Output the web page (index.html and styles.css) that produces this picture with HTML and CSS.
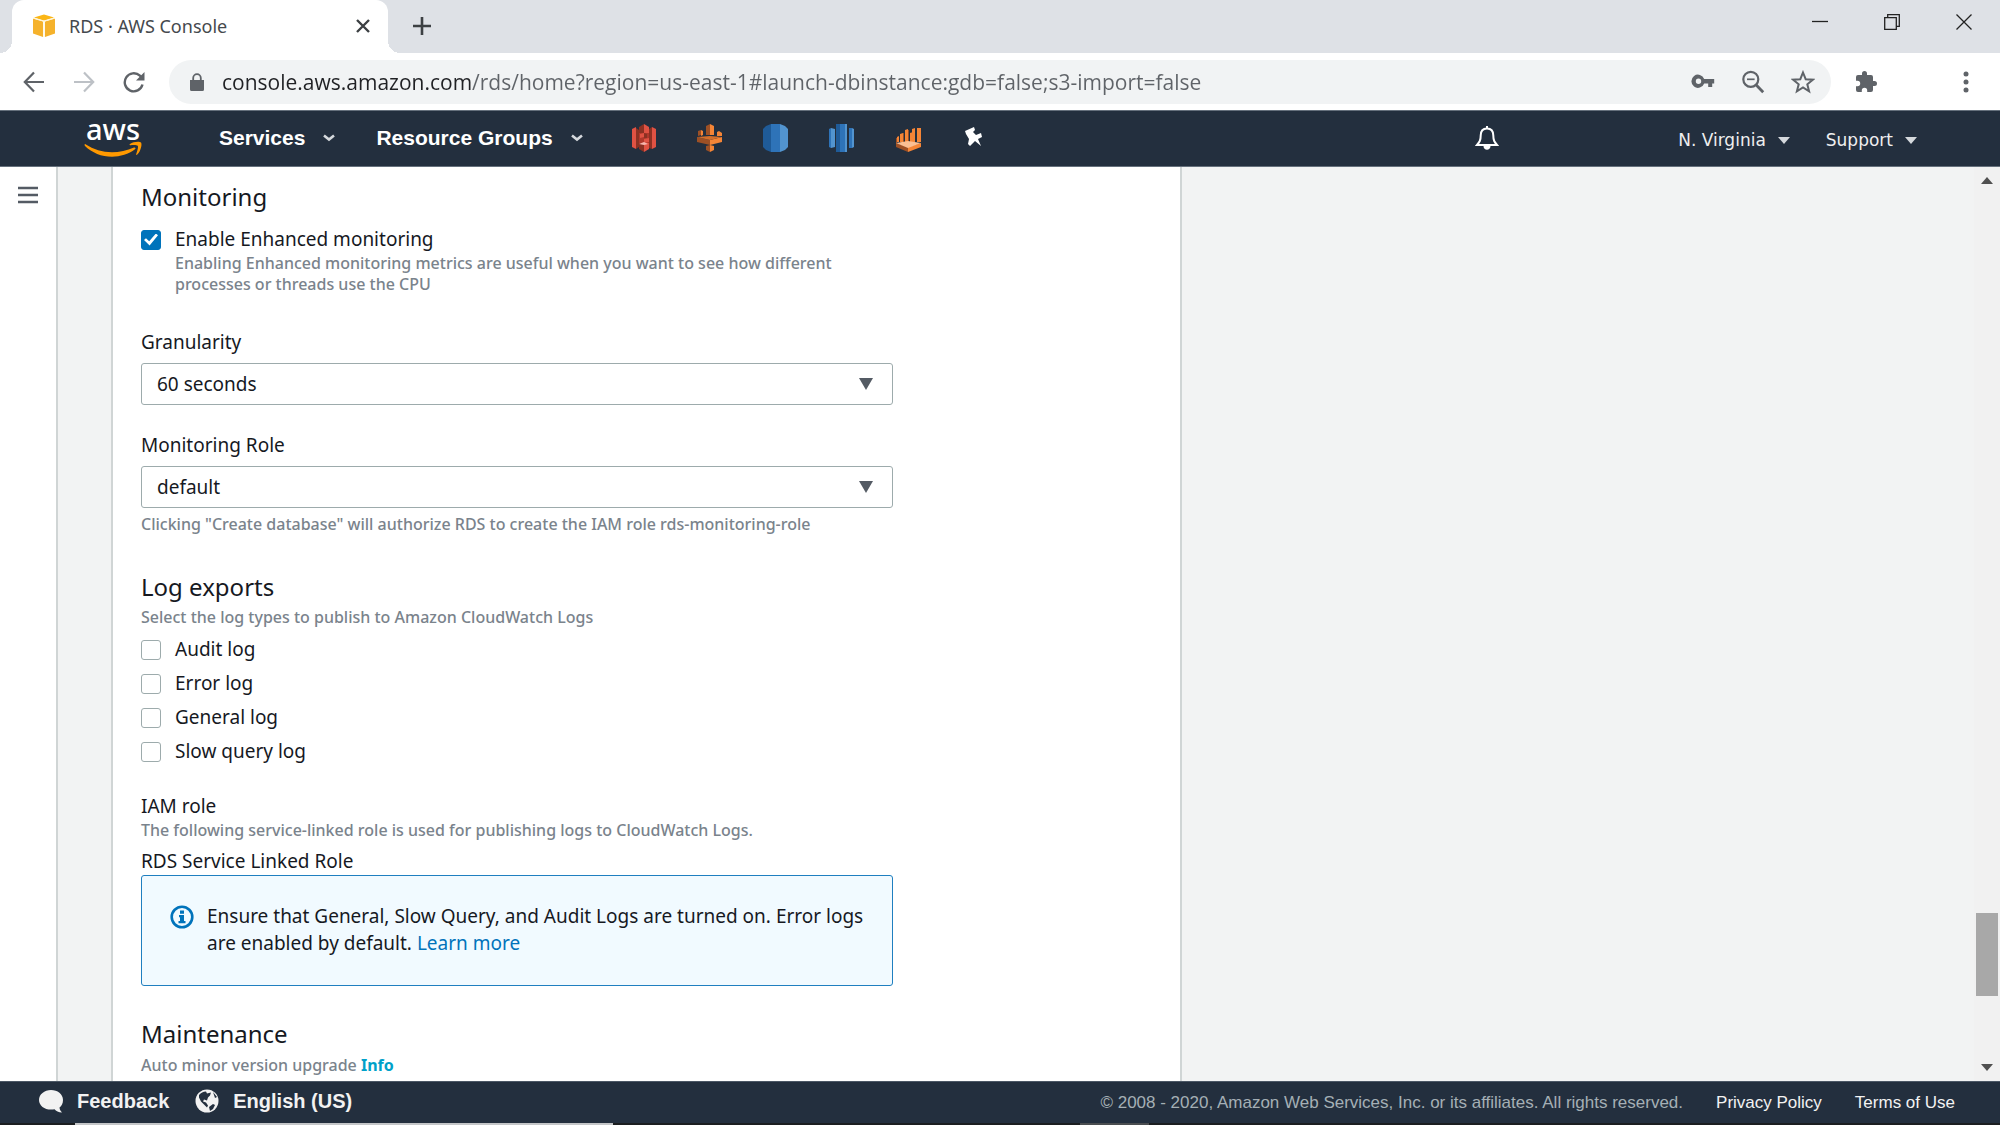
FILE: index.html
```html
<!DOCTYPE html>
<html lang="en">
<head>
<meta charset="utf-8">
<title>RDS · AWS Console</title>
<link rel="stylesheet" href="styles.css">
</head>
<body>
<header class="browser">
  <div class="tabstrip">
    <div class="tab">
      <svg class="tab-favicon" width="24" height="24" viewBox="0 0 24 24"><path fill="#f5b22c" d="M1 4.500 11 7.500V23L1 19.500zM13 7.500 23 4.500V19.500L13 23z"/><path fill="#fbb615" d="M12 .5 22 3.500 12 6.500 2 3.500z"/><path stroke="#fff4d6" fill="none" d="M1 4l11 3.300L23 4M12 7v16"/></svg>
      <span class="tab-title">RDS · AWS Console</span>
      <button class="icon-button tab-close" aria-label="Close tab"><svg width="14" height="14" viewBox="0 0 14 14"><path d="M1 1l12 12M13 1L1 13" stroke="#3c4043" stroke-width="2.400"/></svg></button>
    </div>
    <button class="icon-button new-tab" aria-label="New tab"><svg width="20" height="20" viewBox="0 0 20 20"><path d="M10 1v18M1 10h18" stroke="#3c4043" stroke-width="2.600"/></svg></button>
    <div class="window-controls">
      <button class="icon-button" aria-label="Minimize"><svg width="16" height="16" viewBox="0 0 16 16"><path d="M0 7.500h16" stroke="#222" stroke-width="1.300"/></svg></button>
      <button class="icon-button" aria-label="Restore"><svg width="16" height="16" viewBox="0 0 16 16" fill="none" stroke="#222" stroke-width="1.300"><path d="M.7 3.700h11.600v11.600H.7zM3.700 3.700V.7h11.600v11.600h-3"/></svg></button>
      <button class="icon-button" aria-label="Close"><svg width="16" height="16" viewBox="0 0 16 16"><path d="M.5.5l15 15M15.500.5l-15 15" stroke="#222" stroke-width="1.300"/></svg></button>
    </div>
  </div>
  <div class="toolbar">
    <div class="nav-buttons">
      <button class="icon-button" aria-label="Back"><svg width="22" height="22" viewBox="0 0 22 22" fill="none" stroke="#5f6368" stroke-width="2.200"><path d="M21 11H2M11 1.500L1.800 11l9.200 9.500"/></svg></button>
      <button class="icon-button" aria-label="Forward"><svg width="22" height="22" viewBox="0 0 22 22" fill="none" stroke="#bdc1c6" stroke-width="2.200"><path d="M1 11h19M11 1.500l9.200 9.500-9.200 9.500"/></svg></button>
      <button class="icon-button" aria-label="Reload"><svg width="22" height="22" viewBox="0 0 22 22"><path d="M19.500 13.500a9 9 0 1 1-2.600-8.800l2 2" fill="none" stroke="#5f6368" stroke-width="2.400"/><path d="M21.500 1v8.500H13z" fill="#5f6368"/></svg></button>
    </div>
    <div class="address">
      <svg width="14" height="18" viewBox="0 0 14 18"><path d="M0 7h14v9.500a1.500 1.500 0 0 1-1.500 1.500h-11A1.500 1.500 0 0 1 0 16.500z" fill="#5f6368"/><path d="M3.200 8V5a3.800 3.800 0 0 1 7.600 0v3" fill="none" stroke="#5f6368" stroke-width="1.800"/></svg>
      <input class="url" type="text" aria-label="Address" spellcheck="false" value="console.aws.amazon.com/rds/home?region=us-east-1#launch-dbinstance:gdb=false;s3-import=false">
      <div class="address-actions">
        <button class="icon-button" aria-label="Saved passwords"><svg width="24" height="24" viewBox="0 0 24 24"><path fill="#5f6368" fill-rule="evenodd" d="M13.200 9h10v4.500h-2V17h-4v-3.500h-4a6.600 6.600 0 1 1 0-4.500zM7.500 8.500a2.700 2.700 0 1 0 0 5.400 2.700 2.700 0 0 0 0-5.400z"/></svg></button>
        <button class="icon-button" aria-label="Zoom"><svg width="24" height="24" viewBox="0 0 24 24" fill="none" stroke="#5f6368"><circle cx="9.800" cy="9.300" r="7.500" stroke-width="2.200"/><path d="M6 9.300h7.600" stroke-width="1.700"/><path d="M15 14.800l7.200 7.400" stroke-width="2.800"/></svg></button>
        <button class="icon-button" aria-label="Bookmark"><svg width="24" height="24" viewBox="0 0 24 24"><path d="M12 2.500l2.700 6.700 7.100.5-5.500 4.600 1.800 7L12 17.400l-6.100 3.900 1.800-7-5.500-4.600 7.100-.5z" fill="none" stroke="#5f6368" stroke-width="2"/></svg></button>
      </div>
    </div>
    <button class="icon-button extensions" aria-label="Extensions"><svg width="24" height="24" viewBox="0 0 24 24"><path fill="#5f6368" d="M20.500 11H19V7a2 2 0 0 0-2-2h-4V3.500a2.500 2.500 0 0 0-5 0V5H4a2 2 0 0 0-2 2v3.800h1.500a2.700 2.700 0 0 1 0 5.400H2V20a2 2 0 0 0 2 2h3.800v-1.500a2.700 2.700 0 0 1 5.400 0V22H17a2 2 0 0 0 2-2v-4h1.500a2.500 2.500 0 0 0 0-5z"/></svg></button>
    <button class="icon-button menu" aria-label="Browser menu"><svg width="6" height="22" viewBox="0 0 6 22" fill="#5f6368"><circle cx="3" cy="3" r="2.500"/><circle cx="3" cy="11" r="2.500"/><circle cx="3" cy="19" r="2.500"/></svg></button>
  </div>
</header>

<nav class="console-nav">
  <a class="logo" href="#" aria-label="AWS home">
    <span class="logo-word">aws</span>
    <svg class="logo-smile" width="58" height="18" viewBox="0 0 58 18"><path fill="#ff9900" d="M1.500 3.200c8 5.200 17 8 26.500 8 7.500 0 15-1.600 22-4.700 1.200-.5 2.200.8 1 1.800C44.800 13 36 15.800 28 15.800 17.500 15.800 8 11.700 1 5 .2 4 .6 2.700 1.500 3.200z"/><path fill="#ff9900" d="M46 3c3-2.300 9.500-3 11-1.500 1.400 1.700-.5 9-3.700 12-.7.700-1.500.4-1.100-.6 1-2.800 2.400-7 1.500-8.200-.9-1-4.900-.8-7.300-.5-.9.100-1.200-.6-.4-1.200z"/></svg>
  </a>
  <button class="nav-menu services">Services <svg width="14" height="8" viewBox="0 0 14 8"><path d="M2 1.500l5 4 5-4" fill="none" stroke="#d5d9dd" stroke-width="2.600"/></svg></button>
  <button class="nav-menu">Resource Groups <svg width="14" height="8" viewBox="0 0 14 8"><path d="M2 1.500l5 4 5-4" fill="none" stroke="#d5d9dd" stroke-width="2.600"/></svg></button>
  <div class="shortcuts">
    <a href="#" aria-label="S3"><svg width="28" height="28" viewBox="0 0 28 28"><path fill="#e05243" d="M2 5l4-2v22l-4-2zM22 3l4 2v18l-4 2z"/><path fill="#8c3123" d="M6 4l3 2v17l-3 2zM22 3l-3 2v19l3 1z"/><path fill="#8c3123" d="M9 3l5-3v28l-5-3z"/><path fill="#e05243" d="M14 0l5 3v22l-5 3z"/><path fill="#b0382b" d="M9 9h10v10H9z"/><path fill="#e05243" d="M10 10l4-1v4l-4 1zM14 15l5-1v4l-5 1z"/><path fill="#8c3123" d="M14 9l3 1v4h-3z"/><path fill="#f7b5ad" d="M9 20l5-2 4 2-4 1z"/></svg></a>
    <a href="#" aria-label="IoT"><svg width="28" height="28" viewBox="0 0 28 28"><path fill="#9d5025" d="M1 13l13 3v5L1 18zM2 7l3-1v5l-3 1zM10 2l4-2v11h-4zM10 22l4-1v7l-4-2z"/><path fill="#f58536" d="M14 16l12-3v5l-12 3zM5 6l2 1v4l-2 1zM14 0l4 2v9h-4zM14 21l4 1v4l-4 2zM21 8l2-1 3 2v3h-5z"/><path fill="#d46f2b" d="M1 13l13-1 12 1-12 3z"/></svg></a>
    <a href="#" aria-label="RDS"><svg width="28" height="28" viewBox="0 0 28 28"><path fill="#1f5b98" d="M1 5l3-3 5-2v28l-5-2-3-3z"/><path fill="#2e73b8" d="M9 0h9v28H9z"/><path fill="#5294cf" d="M18 0l5 2 3 3v18l-3 3-5 2z"/></svg></a>
    <a href="#" aria-label="Redshift"><svg width="28" height="28" viewBox="0 0 28 28"><path fill="#2e73b8" d="M1 5l2-1v20l-2-1zM21 4h3v20h-3z"/><path fill="#5294cf" d="M3 4l4 1v18l-4 1zM17 0h2v28h-2zM24 4l2 1v18l-2 1z"/><path fill="#1f5b98" d="M8 0h4v28H8z"/><path fill="#2e73b8" d="M12 0h5v28h-5z"/></svg></a>
    <a href="#" aria-label="EMR"><svg width="28" height="28" viewBox="0 0 28 28"><path fill="#f58536" d="M3 13l2-1v6H3zM6 10l3-1v9H6zM11 6l3-1v13h-3zM16 9l3-1v10h-3zM18 5l3-1v14h-3zM23 4h4v14h-4z"/><path fill="#9d5025" d="M2 14h1v6H2zM9 9h1v9H9zM14 6h1v12h-1zM2 19l12 4v5L2 23z"/><path fill="#f58536" d="M27 19l-13 4v5l13-5z"/><path fill="#fbbf93" d="M2 19l12-2 13 2-13 5z"/></svg></a>
    <a href="#" aria-label="Customize shortcuts"><svg width="28" height="28" viewBox="0 0 28 28"><path fill="#fff" d="M5 7l9-4 1 3-2 2 3 3 5-2 1 4-4 2 3 7-6-5-5 5-2-2 1-5-3-5z"/></svg></a>
  </div>
  <button class="icon-button bell" aria-label="Notifications"><svg width="24" height="26" viewBox="0 0 24 26"><path d="M12 3.500c-4.500 0-6.300 3.300-6.300 7 0 5-1.200 6.500-3.700 9.500h20c-2.500-3-3.700-4.500-3.700-9.500 0-3.700-1.800-7-6.300-7z" fill="none" stroke="#fff" stroke-width="2"/><path fill="#fff" d="M11 1h2v3h-2zM8.500 21h7c0 5-7 5-7 0z"/></svg></button>
  <button class="nav-menu small">N. Virginia <svg width="12" height="7" viewBox="0 0 12 7"><path d="M0 0h12L6 7z" fill="#d5d9dd"/></svg></button>
  <button class="nav-menu small">Support <svg width="12" height="7" viewBox="0 0 12 7"><path d="M0 0h12L6 7z" fill="#d5d9dd"/></svg></button>
</nav>

<div class="workspace">
  <aside class="rail">
    <button class="icon-button" aria-label="Open navigation"><svg width="22" height="18" viewBox="0 0 22 18"><path d="M1 2h20M1 9h20M1 16h20" stroke="#545b64" stroke-width="2.600"/></svg></button>
  </aside>
  <main class="content">
    <form class="card">
      <section class="group">
        <h2>Monitoring</h2>
        <div class="check-row first">
          <input type="checkbox" id="enhanced" checked aria-describedby="enhanced-hint">
          <label for="enhanced">Enable Enhanced monitoring</label>
        </div>
        <p class="hint indented" id="enhanced-hint">Enabling Enhanced monitoring metrics are useful when you want to see how different processes or threads use the CPU</p>
        <div class="field">
          <label for="granularity">Granularity</label>
          <div class="select-wrap">
            <select id="granularity"><option>60 seconds</option></select>
            <svg width="14" height="12" viewBox="0 0 14 12"><path d="M0 0h14L7 12z" fill="#545b64"/></svg>
          </div>
        </div>
        <div class="field role">
          <label for="role">Monitoring Role</label>
          <div class="select-wrap">
            <select id="role"><option>default</option></select>
            <svg width="14" height="12" viewBox="0 0 14 12"><path d="M0 0h14L7 12z" fill="#545b64"/></svg>
          </div>
          <p class="hint">Clicking "Create database" will authorize RDS to create the IAM role rds-monitoring-role</p>
        </div>
      </section>
      <section class="group logs">
        <h2>Log exports</h2>
        <p class="hint">Select the log types to publish to Amazon CloudWatch Logs</p>
        <div class="check-list">
          <div class="check-row"><input type="checkbox" id="audit"><label for="audit">Audit log</label></div>
          <div class="check-row"><input type="checkbox" id="error"><label for="error">Error log</label></div>
          <div class="check-row"><input type="checkbox" id="general"><label for="general">General log</label></div>
          <div class="check-row"><input type="checkbox" id="slow"><label for="slow">Slow query log</label></div>
        </div>
        <p class="label iam">IAM role</p>
        <p class="hint">The following service-linked role is used for publishing logs to CloudWatch Logs.</p>
        <p class="label linked">RDS Service Linked Role</p>
        <div class="notice">
          <svg width="24" height="24" viewBox="0 0 24 24"><circle cx="12" cy="12" r="10.300" fill="none" stroke="#0073bb" stroke-width="2.600"/><path fill="#0073bb" d="M10 5.500h4v3.300h-4zM9 10h5v6h1.500v2.300h-7V16H10v-3.700H9z"/></svg>
          <p>Ensure that General, Slow Query, and Audit Logs are turned on. Error logs are enabled by default. <a href="#">Learn more</a></p>
        </div>
      </section>
      <section class="group maintenance">
        <h2>Maintenance</h2>
        <p class="hint">Auto minor version upgrade <a class="info" href="#">Info</a></p>
      </section>
    </form>
  </main>
  <div class="scrollbar" aria-hidden="true">
    <svg width="12" height="7" viewBox="0 0 12 7"><path d="M0 7h12L6 0z" fill="#505050"/></svg>
    <div class="track"><div class="thumb"></div></div>
    <svg width="12" height="7" viewBox="0 0 12 7"><path d="M0 0h12L6 7z" fill="#505050"/></svg>
  </div>
</div>

<footer class="console-footer">
  <button class="footer-button"><svg width="24" height="24" viewBox="0 0 24 24"><path fill="#f2f2f2" d="M12 1c6.500 0 12 4 12 10 0 3.500-1.500 6-3.500 7.500.2 2 1 3.500 2.500 5-3.500 0-6-1.500-7.500-3.300-1 .3-2.200.4-3.500.4-6.600 0-12-4-12-9.600S5.400 1 12 1z"/></svg>Feedback</button>
  <button class="footer-button"><svg width="24" height="24" viewBox="0 0 24 24"><circle cx="12" cy="12" r="11.500" fill="#f2f2f2"/><path fill="#232f3e" d="M4 6c2-2 4-3.500 7-3.500l1 2 4-1-1 3-2 2-1 3-3-1-1 2 3 1 2 3-1 2-3-3-3-3-2-4zM14 18l4-3 2 1-2 4-3 2zM18 3l4 5-2 1z"/></svg>English (US)</button>
  <p class="copyright">© 2008 - 2020, Amazon Web Services, Inc. or its affiliates. All rights reserved.</p>
  <a href="#">Privacy Policy</a>
  <a href="#">Terms of Use</a>
</footer>
<div class="taskbar" aria-hidden="true"><span class="task-search"></span><span class="task-active"></span></div>
</body>
</html>
```
FILE: styles.css
```css
*, *::before, *::after { box-sizing: border-box; }

body {
  margin: 0;
  height: 100vh;
  display: flex;
  flex-direction: column;
  overflow: hidden;
  background: #f2f3f3;
  color: #16191f;
  font-family: "Noto Sans", "Open Sans", sans-serif;
  font-size: 19px;
  line-height: 27px;
}

h2, p { margin: 0; }
svg { display: block; flex: none; }
button { font: inherit; color: inherit; background: none; border: 0; padding: 0; cursor: pointer; }
a { text-decoration: none; }

.icon-button { display: flex; align-items: center; justify-content: center; }

/* Browser frame */
.tabstrip {
  display: flex;
  align-items: flex-start;
  height: 53px;
  padding-left: 12px;
  background: #dee1e6;
}
.tab {
  position: relative;
  display: flex;
  align-items: center;
  width: 376px;
  height: 53px;
  padding: 0 18px 1px 20px;
  background: #fff;
  border-radius: 12px 12px 0 0;
}
.tab::before, .tab::after {
  content: "";
  position: absolute;
  bottom: 0;
  width: 12px;
  height: 12px;
}
.tab::before { right: 100%; background: radial-gradient(circle at 0 0, #dee1e6 12px, #fff 12px); }
.tab::after { left: 100%; background: radial-gradient(circle at 100% 0, #dee1e6 12px, #fff 12px); }
.tab-title { margin-left: 13px; font-size: 18px; color: #45494d; }
.tab-close { margin-left: auto; }
.new-tab { height: 52px; margin-left: 24px; }
.window-controls { display: flex; gap: 56px; margin: 14px 28px 0 auto; }

.toolbar {
  display: flex;
  align-items: center;
  height: 57px;
  padding: 0 31px 0 23px;
  background: #fff;
}
.nav-buttons { display: flex; gap: 28px; }
.address {
  flex: 1;
  display: flex;
  align-items: center;
  height: 44px;
  margin-left: 24px;
  padding: 0 16px 0 21px;
  border-radius: 22px;
  background: #f1f3f4;
}
.url {
  flex: 1;
  min-width: 0;
  margin-left: 18px;
  padding: 0;
  border: 0;
  outline: 0;
  font: 21px/30px "Open Sans", "Noto Sans", sans-serif;
  color: transparent;
  background: linear-gradient(to right, #202124 249px, #5f6368 249px);
  -webkit-background-clip: text;
  background-clip: text;
}
.address-actions { display: flex; gap: 26px; }
.extensions { margin-left: 23px; }
.menu { margin-left: auto; padding-left: 85px; }

/* Console navigation */
.console-nav {
  display: flex;
  align-items: center;
  height: 57px;
  padding: 0 83px 2px 84px;
  background: #232f3e;
  border-top: 1px solid #65707c;
  border-bottom: 1px solid #65707c;
  color: #fff;
}
.logo { display: flex; flex-direction: column; align-items: center; color: #fff; }
.logo-word { font-size: 29px; line-height: 24px; font-weight: 500; }
.nav-menu {
  display: flex;
  align-items: center;
  gap: 17px;
  margin-right: 40px;
  font: bold 21px/27px "Liberation Sans", Arial, sans-serif;
}
.services { margin-left: 77px; }
.shortcuts { display: flex; gap: 38px; margin-left: 6px; }
.bell { margin-left: auto; margin-right: 179px; }
.nav-menu.small {
  gap: 12px;
  margin-right: 36px;
  padding-top: 5px;
  font: 17px/24px "DejaVu Sans", Verdana, sans-serif;
  color: #eee;
}
.nav-menu.small:last-child { margin-right: 0; }

/* Workspace */
.workspace { flex: 1; min-height: 0; display: flex; overflow: hidden; }
.rail {
  width: 58px;
  flex: none;
  padding: 19px 0 0 17px;
  background: #fff;
  border-right: 2px solid #d0d5d5;
}
.content { flex: 1; min-width: 0; padding-left: 53px; overflow: hidden; }
.card {
  width: 58%;
  max-width: 1071px;
  min-height: 100%;
  padding: 15px 28px 32px;
  background: #fff;
  border-left: 2px solid #d0d5d5;
  border-right: 2px solid #d0d5d5;
}
.group { max-width: 752px; }
.group h2 { font-size: 24px; line-height: 30px; font-weight: 400; }
.hint { font-size: 16px; line-height: 21px; font-weight: 500; color: #7a838c; }
.indented { margin-left: 34px; padding-right: 48px; }

.check-row { display: flex; align-items: center; gap: 14px; }
.check-row.first { margin-top: 14px; }
.check-row input {
  appearance: none;
  display: grid;
  place-items: center;
  width: 20px;
  height: 20px;
  margin: 0;
  border: 1px solid #9dabac;
  border-radius: 3px;
  background: #fff;
}
.check-row input:checked { background: #0073bb; border-color: #0073bb; }
.check-row input:checked::before {
  content: "";
  width: 14px;
  height: 12px;
  background: #fff;
  clip-path: polygon(0 55%, 14% 40%, 37% 65%, 85% 0, 100% 14%, 40% 100%);
}

.field { display: flex; flex-direction: column; margin-top: 34px; }
.field.role { margin-top: 27px; }
.field .hint { margin-top: 6px; }
.select-wrap { position: relative; margin-top: 7px; }
.select-wrap svg { position: absolute; right: 20px; top: 15px; pointer-events: none; }
select {
  appearance: none;
  display: block;
  width: 100%;
  height: 42px;
  padding: 0 48px 0 15px;
  border: 1px solid #9dabac;
  border-radius: 3px;
  background: #fff;
  color: #16191f;
  font: inherit;
}

.logs { margin-top: 37px; }
.logs > .hint { margin-top: 5px; }
.check-list { display: grid; gap: 7px; margin-top: 8px; }
.iam { margin-top: 28px; }
.logs > .iam + .hint { margin-top: 0; }
.linked { margin-top: 7px; }
.notice {
  display: flex;
  gap: 13px;
  padding: 27px 20px 28px 28px;
  border: 1px solid #1f7fc0;
  border-radius: 3px;
  background: #f1faff;
}
.notice svg { margin-top: 2px; }
.notice a { color: #0073bb; }
.maintenance { margin-top: 33px; }
.maintenance .hint { margin-top: 6px; }
.info { color: #00a1c9; font-weight: 700; }

.scrollbar {
  width: 26px;
  flex: none;
  display: flex;
  flex-direction: column;
  align-items: center;
  padding: 10px 0;
  background: #f1f1f1;
}
.track { flex: 1; display: flex; flex-direction: column; align-items: center; }
.track::before { content: ""; flex: 728; }
.track::after { content: ""; flex: 68; }
.thumb { flex: 83; width: 22px; background: #a8a8a8; }

/* Footer */
.console-footer {
  display: flex;
  align-items: center;
  height: 42px;
  padding: 0 45px 0 39px;
  background: #232f3e;
  border-top: 1px solid #4b5765;
  color: #f2f2f2;
  font: 17px/24px "Liberation Sans", Arial, sans-serif;
}
.footer-button {
  display: flex;
  align-items: center;
  gap: 14px;
  margin-right: 26px;
  padding-bottom: 3px;
  font: bold 20px/24px "Liberation Sans", Arial, sans-serif;
}
.copyright { margin-left: auto; color: #a5afb5; }
.console-footer a { margin-left: 33px; color: #f2f2f2; }

.taskbar { display: flex; gap: 467px; height: 2px; padding-left: 75px; background: #1b1e20; }
.task-search { width: 538px; background: #c4c6c8; }
.task-active { width: 69px; background: #4a4d50; }
```
